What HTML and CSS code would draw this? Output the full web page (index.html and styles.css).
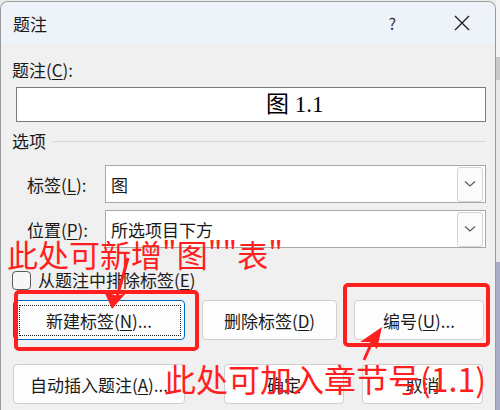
FILE: index.html
```html
<!DOCTYPE html>
<html lang="zh-CN">
<head>
    <meta charset="UTF-8">
    <title>题注</title>
    <link rel="stylesheet" href="styles.css">
</head>
<body>
    <div class="screen">
        <div class="dialog">
            <div class="titlebar">
                <span class="title">题注</span>
                <span class="help">?</span>
                <span class="close">
                    <svg width="16" height="16" viewBox="0 0 16 16"><path d="M1 1 L15 15 M15 1 L1 15" stroke="#1b1b1b" stroke-width="1.3" fill="none"/></svg>
                </span>
            </div>
            <div class="body">
                <div class="cap-label">题注(<u>C</u>):</div>
                <div class="cap-input">图 1.1</div>

                <div class="group-head"><span>选项</span><span class="rule"></span></div>

                <div class="field-row first">
                    <span class="field-label">标签(<u>L</u>):</span>
                    <div class="combo">
                        <span class="combo-text">图</span>
                        <span class="drop"><svg width="12" height="8" viewBox="0 0 12 8"><path d="M1 1.5 L6 6 L11 1.5" stroke="#555" stroke-width="1.1" fill="none"/></svg></span>
                    </div>
                </div>
                <div class="field-row">
                    <span class="field-label">位置(<u>P</u>):</span>
                    <div class="combo">
                        <span class="combo-text">所选项目下方</span>
                        <span class="drop"><svg width="12" height="8" viewBox="0 0 12 8"><path d="M1 1.5 L6 6 L11 1.5" stroke="#555" stroke-width="1.1" fill="none"/></svg></span>
                    </div>
                </div>

                <div class="check-row">
                    <span class="box"></span>
                    <span>从题注中排除标签(<u>E</u>)</span>
                </div>

                <div class="btn-row">
                    <button class="btn focus w-new">新建标签(<u>N</u>)...</button>
                    <button class="btn w-del">删除标签(<u>D</u>)</button>
                    <button class="btn w-num">编号(<u>U</u>)...</button>
                </div>
                <div class="btn-row second">
                    <button class="btn w-new">自动插入题注(<u>A</u>)...</button>
                    <button class="btn w-ok">确定</button>
                    <button class="btn w-cancel">取消</button>
                </div>
            </div>
        </div>
        <div class="side"></div>

        <!-- annotations drawn over the dialog -->
        <div class="note note-top">此处可新增"图""表"</div>
        <div class="note note-bottom">此处可加入章节号(1.1)</div>
        <div class="mark mark-new"></div>
        <div class="mark mark-num"></div>
        <svg class="arrows" width="500" height="410" viewBox="0 0 500 410">
            <path d="M128 258 L117 297" stroke="#ff1f1f" stroke-width="3" fill="none"/>
            <polygon points="112,309 104,291 117,296 126,293" fill="#ff1f1f"/>
            <path d="M364 360 L372 342" stroke="#ff1f1f" stroke-width="3" fill="none"/>
            <polygon points="382,327 360,342 370,342 377,349" fill="#ff1f1f"/>
        </svg>
    </div>
</body>
</html>
```

FILE: styles.css
```css
* {
    box-sizing: border-box;
}
body {
    margin: 0;
    width: 500px;
    height: 410px;
    overflow: hidden;
    font-family: "Noto Sans CJK SC", "Noto Sans", sans-serif;
    color: #1a1a1a;
    background: #ececec;
}
u {
    text-decoration: underline;
    text-underline-offset: 2px;
    text-decoration-thickness: 1px;
}
.screen {
    position: relative;
    width: 500px;
    height: 410px;
    display: flex;
    overflow: hidden;
}
.dialog {
    width: 496px;
    height: 409px;
    margin-top: 1px;
    border: 1px solid #9a9a9a;
    border-bottom: none;
    border-radius: 8px 8px 0 0;
    background: #f0f0f0;
    overflow: hidden;
    font-size: 17px;
}
.titlebar {
    height: 42px;
    background: #eef2f9;
    display: flex;
    align-items: center;
    padding-left: 12px;
}
.title {
    flex: 1;
}
.help {
    font-size: 16px;
    color: #333;
    margin-right: 58px;
}
.close {
    display: flex;
    margin-right: 25px;
}
.body {
    padding: 0 9px 0 11px;
}
.cap-label {
    margin-top: 16px;
    height: 20px;
    line-height: 20px;
}
.cap-input {
    margin: 7px 0 0 4px;
    height: 35px;
    border: 1px solid #7a7a80;
    background: #fff;
    font-family: "Liberation Serif", "Noto Sans CJK SC", serif;
    font-size: 23px;
    line-height: 33px;
    padding-left: 249px;
    color: #000;
}
.group-head {
    margin-top: 9px;
    height: 20px;
    line-height: 20px;
    display: flex;
    align-items: center;
}
.rule {
    flex: 1;
    height: 1px;
    background: #d8d8d8;
    margin-left: 7px;
}
.field-row {
    display: flex;
    align-items: center;
    height: 38px;
    margin-top: 7px;
}
.field-row.first {
    margin-top: 14px;
}
.field-label {
    width: 93px;
    padding-left: 15px;
}
.combo {
    flex: 1;
    height: 38px;
    display: flex;
    align-items: center;
    border: 1px solid #a8a8a8;
    background: #fff;
    padding-right: 2px;
}
.combo-text {
    flex: 1;
    padding-left: 5px;
}
.drop {
    width: 26px;
    height: 35px;
    border: 1px solid #d4d4d4;
    border-radius: 3px;
    background: #fbfbfb;
    display: flex;
    align-items: center;
    justify-content: center;
}
.check-row {
    margin-top: 22px;
    height: 20px;
    line-height: 20px;
    display: flex;
    align-items: center;
}
.box {
    width: 19px;
    height: 19px;
    border: 1px solid #5c5c5c;
    border-radius: 4px;
    background: #f7f7f7;
    margin-right: 7px;
}
.btn-row {
    display: flex;
    height: 40px;
    margin-top: 10px;
    padding-left: 1px;
}
.btn-row.second {
    margin-top: 24px;
}
.btn {
    position: relative;
    height: 40px;
    border: 1px solid #d0d0d0;
    border-radius: 4px;
    background: #fdfdfd;
    font-family: inherit;
    font-size: 17px;
    color: #1a1a1a;
    padding: 0;
}
.btn.focus {
    border-color: #0067c0;
}
.btn.focus::after {
    content: "";
    position: absolute;
    left: 5px;
    right: 3px;
    top: 4px;
    bottom: 3px;
    border: 1px dotted #222;
}
.w-new {
    width: 172px;
}
.w-del {
    width: 135px;
    margin-left: 17px;
}
.w-num {
    width: 130px;
    margin-left: 17px;
}
.w-ok {
    width: 120px;
    margin-left: 39px;
}
.w-cancel {
    width: 121px;
    margin-left: 18px;
}
.side {
    flex: 1;
    background: linear-gradient(#f4f4f4 0, #f4f4f4 57px, #c9c9c9 57px, #c9c9c9 80px, #e9e9e9 80px, #e9e9e9 262px, #abadc6 262px);
}
.note {
    position: absolute;
    color: #ff1f1f;
    white-space: nowrap;
    line-height: 1;
}
.note-top {
    left: 7px;
    top: 238px;
    font-size: 31px;
}
.note-bottom {
    left: 164px;
    top: 362px;
    font-size: 32px;
}
.mark {
    position: absolute;
    border: 4px solid #ff1f1f;
    border-radius: 5px;
}
.mark-new {
    left: 14px;
    top: 290px;
    width: 185px;
    height: 61px;
}
.mark-num {
    left: 343px;
    top: 283px;
    width: 147px;
    height: 64px;
}
.arrows {
    position: absolute;
    left: 0;
    top: 0;
}
```
